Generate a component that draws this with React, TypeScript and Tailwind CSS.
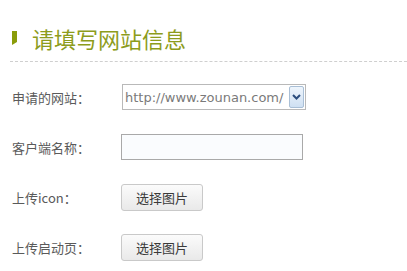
import React from "react";

const cjk = { fontFamily: '"Noto Sans CJK SC", "Noto Sans", sans-serif' };

function Label({ children }: { children: React.ReactNode }) {
  return (
    <div className="w-[109px] shrink-0 text-[13px] leading-none text-[#5a5a5a]" style={cjk}>
      {children}
    </div>
  );
}

function PickButton() {
  return (
    <button
      className="w-[82px] h-[27px] rounded-[3px] border border-[#c9c9c9] bg-gradient-to-b from-[#fbfbfb] to-[#e9e9e9] text-[13px] leading-none text-[#3a3a3a]"
      style={cjk}
    >
      选择图片
    </button>
  );
}

export default function App() {
  return (
    <div className="w-[407px] h-[271px] bg-white overflow-hidden">
      <div className="flex items-center pl-[12px] pt-[28px] h-[48px]">
        <svg width="5" height="14" viewBox="0 0 5 14" className="shrink-0">
          <polygon points="0,0 5,0 5,11 0,14" fill="#8a9c0a" />
        </svg>
        <div className="ml-[15px] text-[22px] leading-none text-[#8d9c1c]" style={cjk}>
          请填写网站信息
        </div>
      </div>
      <div className="ml-[10px] mt-[13px] border-t border-dashed border-[#cfcfcf]" />
      <div className="pl-[12px] pt-[10px]">
        <div className="flex items-center h-[50px]">
          <Label>申请的网站：</Label>
          <div className="ml-[1px] w-[184px] h-[26px] border border-[#b9b9b9] bg-white flex items-center justify-between">
            <span
              className="pl-[2px] text-[13px] leading-none text-[#7a7a7a]"
              style={{ fontFamily: '"DejaVu Sans", Verdana, sans-serif' }}
            >
              http://www.zounan.com/
            </span>
            <div className="mr-[1px] w-[15px] h-[22px] border border-[#a9bfd6] rounded-[2px] bg-gradient-to-b from-[#eef5fc] to-[#cfe0f2] flex items-center justify-center">
              <svg width="9" height="6" viewBox="0 0 9 6">
                <path d="M1 1 L4.5 4.5 L8 1" stroke="#2c4d7e" strokeWidth="2" fill="none" />
              </svg>
            </div>
          </div>
        </div>
        <div className="flex items-center h-[50px]">
          <Label>客户端名称：</Label>
          <div className="w-[182px] h-[26px] border border-[#a9a9a9] bg-[#fafcfe]" />
        </div>
        <div className="flex items-center h-[50px]">
          <Label>上传icon：</Label>
          <PickButton />
        </div>
        <div className="flex items-center h-[50px]">
          <Label>上传启动页：</Label>
          <PickButton />
        </div>
      </div>
    </div>
  );
}
